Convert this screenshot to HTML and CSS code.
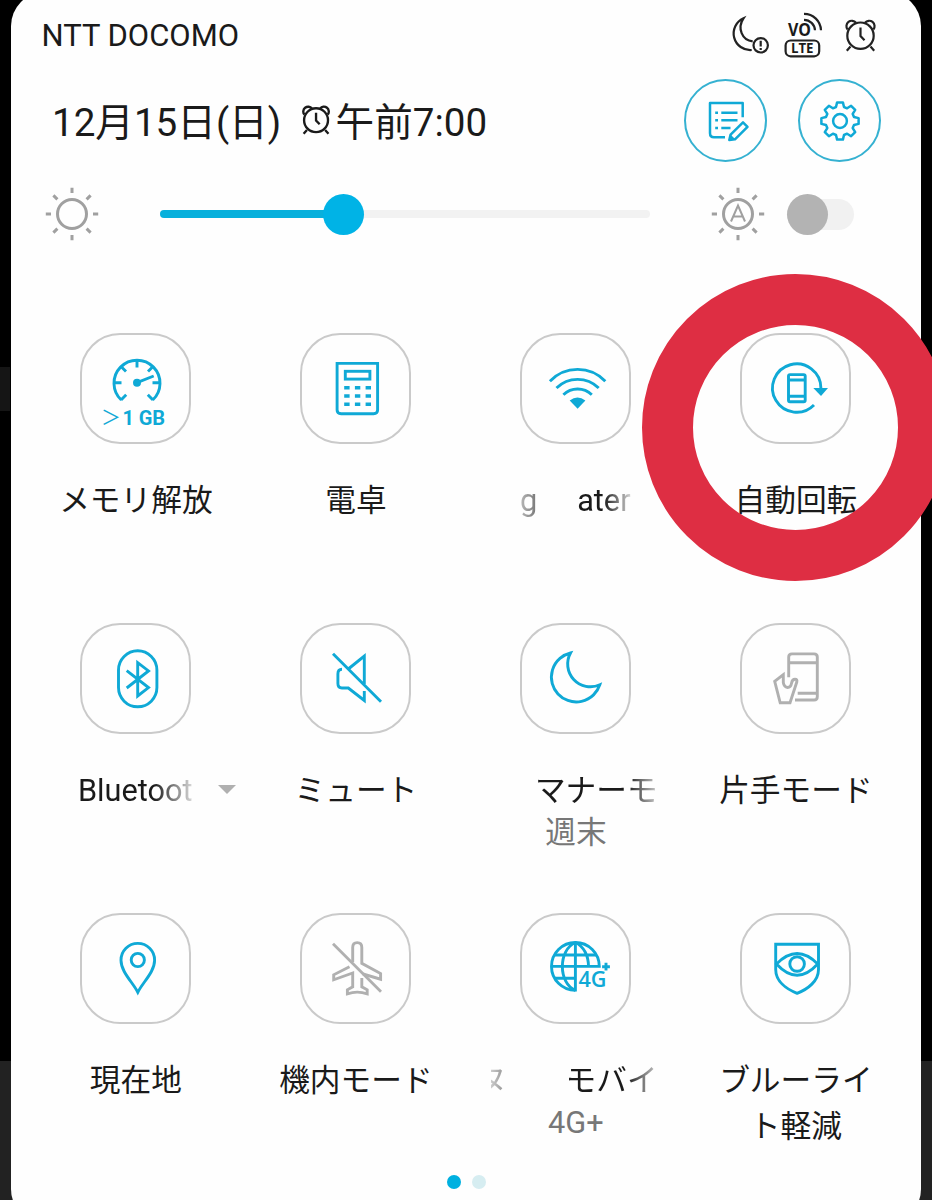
FILE: index.html
```
<!DOCTYPE html>
<html lang="ja">
<head>
    <meta charset="UTF-8">
    <meta name="viewport" content="width=device-width, initial-scale=1.0">
    <title>クイック設定</title>
    <link rel="stylesheet" href="styles.css">
</head>
<body>
    <svg class="defs" width="0" height="0">
        <symbol id="alarm" viewBox="0 0 32 36">
            <circle cx="15.5" cy="17.7" r="13.2"/>
            <path d="M2.6 11.5 A5.2 5.2 0 1 1 11 4.8 M20 4.8 A5.2 5.2 0 1 1 28.4 11.5 M15.5 9.5 V18 L19.5 22.2 M5.5 28.5 L1.8 32.7 M25.5 28.5 L29.2 32.7"/>
        </symbol>
        <symbol id="sun" viewBox="0 0 54 54">
            <circle cx="27" cy="27" r="14.5"/>
            <path d="M27 0.8 V6 M27 48 V53.2 M0.8 27 H6 M48 27 H53.2 M8.4 8.4 L12.4 12.4 M41.6 41.6 L45.6 45.6 M8.4 45.6 L12.4 41.6 M41.6 12.4 L45.6 8.4"/>
        </symbol>
    </svg>

    <div class="panel">
        <div class="status">
            <span class="carrier">NTT DOCOMO</span>
            <div class="status-icons">
                <svg class="dark" width="40" height="40" viewBox="0 0 40 40">
                    <path d="M21.7 35 A16.6 16.6 0 0 1 13.5 3.3 C7 13 12 25.5 22.7 26.3"/>
                    <circle cx="30.7" cy="30.3" r="7.2"/>
                    <path d="M30.7 25.8 V31.5 M30.7 33 V35"/>
                </svg>
                <svg class="dark volte" width="40" height="48" viewBox="0 0 40 48">
                    <text class="vo" x="5" y="24" textLength="23" lengthAdjust="spacingAndGlyphs">VO</text>
                    <path d="M21 1.8 A17 17 0 0 1 38 18.3 M21 7.8 A11 11 0 0 1 32 18.3"/>
                    <rect x="2.6" y="28.5" width="33.6" height="15.8" rx="5"/>
                    <text class="lte" x="8" y="41.3" textLength="22.5" lengthAdjust="spacingAndGlyphs">LTE</text>
                </svg>
                <svg class="dark" width="32" height="36"><use href="#alarm"/></svg>
            </div>
        </div>

        <div class="header">
            <div class="date">
                <span class="day">12月15日(日)</span>
                <svg class="alarm" width="29" height="33"><use href="#alarm"/></svg>
                <span class="time">午前7:00</span>
            </div>
            <div class="buttons">
                <div class="round">
                    <svg width="84" height="84" viewBox="0 0 84 84">
                        <path d="M58.7 38.3 V24 H26 V54.3 Q26 58.3 30 58.3 H41"/>
                        <path d="M31.2 33.7 H34 M31.2 41.3 H34 M31.2 49 H34 M37.3 33.7 H53.5 M37.3 41.3 H53.5 M37.3 49 H46.5"/>
                        <path d="M45.3 61 L46.6 55.6 L59 43.3 L63.5 47.8 L51 60.3 Z"/>
                        <path class="solid" d="M45 61.5 L46.2 55.2 L51.6 60.6 Z"/>
                    </svg>
                </div>
                <div class="round">
                    <svg width="84" height="84" viewBox="-42 -42 84 84">
                        <circle r="6.9"/>
                        <path d="M-4 -14 L-2.9 -18.6 L2.9 -18.6 L4 -14 L7.1 -12.7 L11.1 -15.2 L15.2 -11.1 L12.7 -7.1 L14 -4 L18.6 -2.9 L18.6 2.9 L14 4 L12.7 7.1 L15.2 11.1 L11.1 15.2 L7.1 12.7 L4 14 L2.9 18.6 L-2.9 18.6 L-4 14 L-7.1 12.7 L-11.1 15.2 L-15.2 11.1 L-12.7 7.1 L-14 4 L-18.6 2.9 L-18.6 -2.9 L-14 -4 L-12.7 -7.1 L-15.2 -11.1 L-11.1 -15.2 L-7.1 -12.7 Z"/>
                    </svg>
                </div>
            </div>
        </div>

        <div class="brightness">
            <svg class="sun" width="54" height="54"><use href="#sun"/></svg>
            <div class="slider">
                <div class="fill"></div>
                <div class="thumb"></div>
            </div>
            <svg class="sun auto" width="54" height="54">
                <use href="#sun"/>
                <path class="thin" d="M20 34.5 L27 18.5 L34 34.5 M22.5 29.5 H31.5"/>
            </svg>
            <div class="toggle"><div class="knob"></div></div>
        </div>

        <div class="tiles">
            <div class="tile">
                <div class="icon">
                    <svg viewBox="0 0 112 112">
                        <path d="M40.3 67 A23 23 0 1 1 71.7 67"/>
                        <path d="M56 27 V34.5 M33 49.7 H40.5 M71.5 49.7 H79 M40 33.5 L45 38.5 M72 33.5 L67 38.5 M40 67 L45.2 61.8 M72 67 L66.8 61.8 M56 49.7 L72.7 43"/>
                        <circle class="solid" cx="56" cy="49.7" r="4"/>
                        <text class="gt" x="20" y="92">＞</text>
                        <text class="gb" x="41.5" y="92" textLength="42.5">1 GB</text>
                    </svg>
                </div>
                <div class="label">メモリ解放</div>
            </div>

            <div class="tile">
                <div class="icon">
                    <svg viewBox="0 0 112 112">
                        <path d="M36.1 30.4 H76.6 V77 Q76.6 80.7 72.6 80.7 H40.1 Q36.1 80.7 36.1 77 Z"/>
                        <rect x="44.3" y="38.3" width="24.6" height="7.8"/>
                        <path class="keys" d="M43.2 54.7 H70 M43.2 63 H70 M43.2 71.3 H70"/>
                    </svg>
                </div>
                <div class="label">電卓</div>
            </div>

            <div class="tile">
                <div class="icon">
                    <svg viewBox="0 0 112 112">
                        <path d="M28.9 48.3 A38.2 38.2 0 0 1 84.3 48.3 M35.5 55 A30 30 0 0 1 77.7 55 M42.4 61.7 A20.5 20.5 0 0 1 70.8 61.7"/>
                        <path class="solid" d="M48.7 67.5 Q56.5 61.5 64.4 67.5 L56.6 75.8 Z"/>
                    </svg>
                </div>
                <div class="label scroll wifi"><span>g</span><span>ater</span></div>
            </div>

            <div class="tile">
                <div class="icon">
                    <svg viewBox="0 0 112 112">
                        <path d="M73 72 A24.2 24.2 0 1 1 79.9 55"/>
                        <path class="solid" d="M72.3 55 H87 L80 63 Z"/>
                        <rect x="47.5" y="41.6" width="16.7" height="27.2" rx="1.5"/>
                        <path d="M47.5 47 H64.2 M47.5 63.3 H64.2"/>
                    </svg>
                </div>
                <div class="label">自動回転</div>
                <div class="ring"></div>
            </div>

            <div class="tile">
                <div class="icon">
                    <svg viewBox="0 0 112 112">
                        <rect x="37.5" y="27.8" width="38.4" height="56" rx="19.2"/>
                        <path d="M45.7 47.7 L67.5 64.6 L56.7 73 V39.7 L67.5 47.9 L45.7 65"/>
                    </svg>
                </div>
                <div class="label scroll bluetooth">Bluetoot</div>
                <div class="arrow"></div>
            </div>

            <div class="tile">
                <div class="icon">
                    <svg viewBox="0 0 112 112">
                        <path d="M32 30.7 L80 78.7 M47.3 46 L63.3 33 V61 M41 46.3 Q36.9 46.3 36.9 51 V60.5 Q36.9 65 41 65 H47.3 L63.3 77.5 V68"/>
                    </svg>
                </div>
                <div class="label">ミュート</div>
            </div>

            <div class="tile">
                <div class="icon">
                    <svg viewBox="0 0 112 112">
                        <path d="M49.5 30 A24.8 24.8 0 1 0 78.8 61.8 A22.8 22.8 0 0 1 49.5 30 Z"/>
                    </svg>
                </div>
                <div class="label scroll manner">マナーモ</div>
                <div class="sub">週末</div>
            </div>

            <div class="tile">
                <div class="icon off">
                    <svg viewBox="0 0 112 112">
                        <path d="M47.7 54.3 V34 Q47.7 30.9 51 30.9 H73 Q76.3 30.9 76.3 34 V73.7 Q76.3 77 73 77 H54 M47.7 39.7 H76.3 M56.7 70.3 H76.3"/>
                        <path d="M42.3 51.7 L33.7 58.3 L39.2 79.8 H49 L55.8 59 Q56.5 56.2 54 56.2 Q51.2 56.2 50.6 60 Q49.8 64.5 46.6 64.5 Q43 64 42.3 59.5 Z"/>
                    </svg>
                </div>
                <div class="label">片手モード</div>
            </div>

            <div class="tile">
                <div class="icon">
                    <svg viewBox="0 0 112 112">
                        <path d="M56.8 79.3 C52 69.5 40 59 40 47.2 A16.8 16.8 0 0 1 73.6 47.2 C73.6 59 61.6 69.5 56.8 79.3 Z"/>
                        <circle cx="56.8" cy="47" r="6.6"/>
                    </svg>
                </div>
                <div class="label">現在地</div>
            </div>

            <div class="tile">
                <div class="icon off">
                    <svg viewBox="0 0 112 112">
                        <path d="M32 30.7 L80 78.7"/>
                        <path d="M51.7 49 V34.5 Q51.7 29.6 56.2 29.6 Q60.8 29.6 60.8 34.5 V50.3 L79.6 60.6 V66.2 L62 61"/>
                        <path d="M48.5 53.7 L32.7 61.8 V66.8 L51.7 60 V73.8 L46.4 76.8 V80.8 Q56.2 77.5 66.2 80.8 V76.8 L60.8 73.8 V65"/>
                    </svg>
                </div>
                <div class="label">機内モード</div>
            </div>

            <div class="tile">
                <div class="icon">
                    <svg viewBox="0 0 112 112">
                        <path d="M54.4 77.3 A23.9 23.9 0 1 1 78.3 53.4 H30.5 M54.4 29.5 V78.5"/>
                        <path d="M54.4 29.5 C37 37 37 70 54.4 77.3 M54.4 29.5 C63 33.5 67.5 43 67.5 53.4 M33.5 42 H75.3 M33.5 65.3 H54.4"/>
                        <text class="lte4g" x="57.5" y="74.3" textLength="28" lengthAdjust="spacingAndGlyphs">4G</text>
                        <path d="M85 49.8 V57.6 M81.1 53.7 H88.9"/>
                    </svg>
                </div>
                <div class="label scroll mobile"><span>ヌ</span><span>モバイ</span></div>
                <div class="sub">4G+</div>
            </div>

            <div class="tile">
                <div class="icon">
                    <svg viewBox="0 0 112 112">
                        <path d="M34.7 31.3 H77.5 V56.5 C77.5 68 67 76 56.1 80.3 C45 76 34.7 68 34.7 56.5 Z"/>
                        <path d="M35.5 51 Q56.1 30 76.7 51 Q56.1 73.5 35.5 51 Z"/>
                        <circle cx="56.1" cy="51" r="7.3"/>
                    </svg>
                </div>
                <div class="label">ブルーライト軽減</div>
            </div>
        </div>

        <div class="pages">
            <span class="dot active"></span>
            <span class="dot"></span>
        </div>
    </div>
</body>
</html>
```
FILE: styles.css
```
body {
    margin: 0;
    height: 1200px;
    overflow: hidden;
    background: linear-gradient(#151515, #151515) 0 367px / 10px 44px no-repeat,
                linear-gradient(#000 1061px, #222 1061px);
    font-family: Roboto, "Noto Sans CJK JP", sans-serif;
    color: #1a1a1a;
}
.defs {
    position: absolute;
}
svg {
    fill: none;
    stroke: #0fa9d6;
    stroke-width: 2.9;
    overflow: visible;
}
svg text {
    stroke: none;
    fill: #0fa9d6;
}
.solid {
    fill: #0fa9d6;
    stroke: none;
}
.panel {
    box-sizing: border-box;
    width: 910px;
    height: 1231px;
    margin: -8px 0 0 11px;
    padding-top: 16px;
    background: #fefefe;
    border-radius: 34px;
    display: flow-root;
}

/* status bar */
.status {
    display: flex;
    justify-content: space-between;
    align-items: center;
    height: 54px;
    padding: 0 44px 0 30.5px;
}
.carrier {
    font-size: 31px;
}
.status-icons {
    display: flex;
    align-items: center;
    gap: 13px;
}
.status-icons svg:last-child {
    margin: 2px 0 0 9px;
}
.dark {
    stroke: #222;
    stroke-width: 2.2;
}
.dark text {
    fill: #1a1a1a;
    font-family: "Open Sans", sans-serif;
}
.volte {
    margin-top: 2px;
}
.vo {
    font-size: 18px;
    font-weight: 700;
}
.lte {
    font-size: 14px;
    font-weight: 700;
}

/* date and round buttons */
.header {
    display: flex;
    justify-content: space-between;
    align-items: center;
    height: 84px;
    margin-top: 16.5px;
    margin-bottom: 24.5px;
    padding: 0 40px 0 41px;
}
.date {
    display: flex;
    align-items: center;
    font-size: 38.6px;
    margin-top: -3px;
}
.alarm {
    stroke: #1a1a1a;
    stroke-width: 2.6;
    margin: 3px 5px 0 20.5px;
}
.buttons {
    display: flex;
    gap: 31px;
}
.round {
    box-sizing: border-box;
    width: 83px;
    height: 83px;
    border: 2px solid #35b1d1;
    border-radius: 50%;
    display: flex;
    align-items: center;
    justify-content: center;
}
.round svg {
    flex: none;
    stroke-width: 2.5;
    stroke-linejoin: round;
}

/* brightness */
.brightness {
    display: flex;
    align-items: center;
    height: 54px;
    padding-left: 34.4px;
}
.sun {
    stroke: #a0a0a0;
    stroke-width: 3;
}
.sun .thin {
    stroke-width: 2;
}
.auto {
    margin-left: 61px;
}
.slider {
    display: flex;
    align-items: center;
    width: 490px;
    height: 8px;
    margin-left: 61px;
    border-radius: 4px;
    background: #f2f2f2;
}
.fill {
    width: 172px;
    height: 8px;
    border-radius: 4px;
    background: #08b0dc;
}
.thumb {
    flex: none;
    width: 41px;
    height: 41px;
    margin-left: -9px;
    border-radius: 50%;
    background: #00b3e6;
}
.toggle {
    display: flex;
    align-items: center;
    width: 67px;
    height: 31px;
    margin-left: 22px;
    border-radius: 16px;
    background: #f1f1f1;
}
.knob {
    width: 41px;
    height: 41px;
    border-radius: 50%;
    background: #b3b3b3;
}

/* tiles */
.tiles {
    display: grid;
    grid-template-columns: repeat(4, 220px);
    grid-template-rows: 290px 290px 250px;
    margin: 92px 0 0 14.9px;
}
.tile {
    position: relative;
    display: flex;
    flex-direction: column;
    align-items: center;
}
.icon {
    box-sizing: border-box;
    width: 111px;
    height: 111px;
    border: 2px solid #cacaca;
    border-radius: 40px;
}
.icon svg {
    display: block;
    width: 112px;
    height: 112px;
    margin: -2px 0 0 -1.6px;
}
.off svg {
    stroke: #b0b0b0;
}
.gt {
    font-family: "Noto Sans CJK JP", sans-serif;
    font-size: 20px;
}
.gb {
    font-size: 20px;
    font-weight: 700;
}
.lte4g {
    font-family: "Open Sans", sans-serif;
    font-size: 21px;
    font-weight: 600;
}
.keys {
    stroke-width: 3.4;
    stroke-dasharray: 5.4 5.3;
}
.label {
    width: 160px;
    margin-top: 34px;
    font-size: 30.7px;
    line-height: 46px;
    text-align: center;
}
.scroll {
    display: flex;
    overflow: hidden;
    white-space: nowrap;
    width: 170px;
}
.wifi {
    width: 112px;
    -webkit-mask-image: linear-gradient(to right, transparent -15%, #000 35%, #000 75%, transparent 104%);
    mask-image: linear-gradient(to right, transparent -15%, #000 35%, #000 75%, transparent 104%);
}
.wifi span + span {
    margin-left: 40px;
}
.bluetooth {
    width: 116px;
    -webkit-mask-image: linear-gradient(to right, #000 65%, transparent 105%);
    mask-image: linear-gradient(to right, #000 65%, transparent 105%);
}
.manner,
.mobile {
    -webkit-mask-image: linear-gradient(to right, transparent -7%, #000 25%, #000 80%, transparent 103%);
    mask-image: linear-gradient(to right, transparent -7%, #000 25%, #000 80%, transparent 103%);
}
.manner {
    box-sizing: border-box;
    padding-left: 44px;
}
.mobile span:first-child {
    margin-left: -14px;
}
.mobile span + span {
    margin-left: 58px;
}
.sub {
    font-size: 30.7px;
    line-height: 38px;
    color: #777;
}
.arrow {
    position: absolute;
    left: 192.5px;
    top: 162px;
    border: 9.5px solid transparent;
    border-top-color: #b0b0b0;
    border-bottom: none;
}
/* highlight over the auto rotate tile */
.ring {
    position: absolute;
    left: -43.5px;
    top: -59px;
    width: 205px;
    height: 205px;
    border: 51px solid #de2e43;
    border-radius: 50%;
}

.pages {
    display: flex;
    justify-content: center;
    gap: 11px;
    margin-top: 12px;
}
.dot {
    width: 14px;
    height: 14px;
    border-radius: 50%;
    background: #d6edf1;
}
.active {
    background: #00b0e0;
}
```
